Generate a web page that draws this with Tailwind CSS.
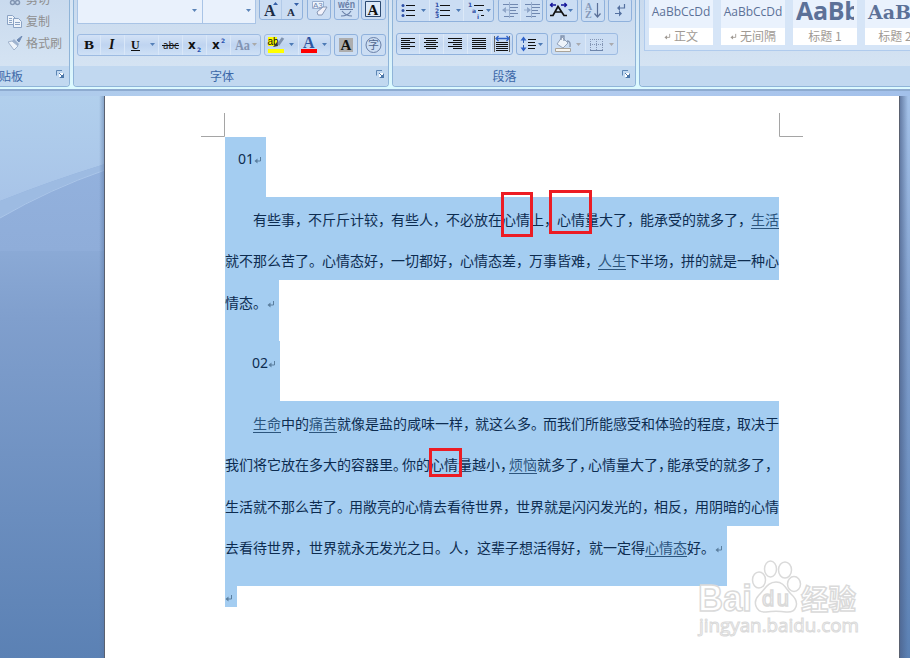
<!DOCTYPE html>
<html lang="zh-CN">
<head>
    <meta charset="UTF-8">
    <meta name="viewport" content="width=device-width, initial-scale=1.0">
    <title>Word</title>
    <script src="https://cdn.jsdelivr.net/npm/@tailwindcss/browser@4"></script>
</head>
<body class="w-[910px] h-[658px] overflow-hidden bg-[#6f8fc4] font-['Noto_Sans_CJK_SC',sans-serif]">
    <svg class="hidden">
        <defs>
            <symbol id="arrow" viewBox="0 0 5 3"><path d="M0 0h5L2.5 3z" fill="currentColor"/></symbol>
            <symbol id="launcher" viewBox="0 0 8 8"><path d="M.5 5.500V.5H6" fill="none" stroke="#5d86b5"/><path d="M3 3h5v5H3z" fill="#fff"/><path d="M3 3l3 3M7.500 3.500V7.500H3.500" stroke="#4d78aa" fill="none"/><path d="M5 5h3v3H5z" fill="#4d78aa"/></symbol>
            <symbol id="ret" viewBox="0 0 8 8"><path d="M6.500 1v4H1.500" fill="none" stroke="currentColor"/><path d="M3.500 2.500v5L0.500 5z" fill="currentColor"/></symbol>
        </defs>
    </svg>

    <!-- ribbon -->
    <header class="flex gap-[3px] h-[91px] w-[920px] bg-linear-to-b from-[#d6e3f3] to-[#dcfaff] border-b-2 border-[#8eabd0] overflow-hidden">
        <!-- clipboard -->
        <section class="flex flex-col w-[70px] h-[87px] shrink-0 border-r border-b border-[#8fb4d8] rounded-br bg-linear-to-b from-[#c9daee] to-[#d8e6f4] overflow-hidden">
            <div class="h-[67px] text-[12px] text-[#8f8f8f] flex flex-col">
                <div class="flex items-center h-[22px] -mt-[12px] pl-[8px] gap-[4px]">
                    <svg class="w-[14px] h-[14px]" viewBox="0 0 14 14" fill="none" stroke="#8396b3" stroke-width="1.500"><path d="M5 0l3 8M10 0L6 8"/><circle cx="4.500" cy="10.500" r="2"/><circle cx="9.500" cy="10.500" r="2"/></svg>
                    <span>剪切</span>
                </div>
                <div class="flex items-center h-[22px] pl-[7px] gap-[4px]">
                    <svg class="w-[15px] h-[13px]" viewBox="0 0 15 13" fill="#eef4fb" stroke="#8ba3c4"><path d="M.5.5h5l3 3v6h-8z"/><path d="M2 3.500h3M2 5.500h3M2 7.500h3"/><path d="M6.500 3.500h5l3 3v6h-8z"/><path d="M8 7.500h5M8 9.500h5"/></svg>
                    <span>复制</span>
                </div>
                <div class="flex items-center h-[22px] pl-[8px] gap-[3px]">
                    <svg class="w-[15px] h-[14px]" viewBox="0 0 15 14"><path d="M14 0l-5 4 2 2z" fill="#6f8bb5" stroke="#6f8bb5"/><path d="M6 3l5 5-1 2-6-5z" fill="#9db2d0"/><path d="M4 5l6 5-4 4L0 6z" fill="#eef4fb" stroke="#9fb2cc"/></svg>
                    <span>格式刷</span>
                </div>
            </div>
            <div class="flex justify-between items-center h-[20px] bg-[#c1d8f0] text-[12px] text-[#3c68a8] pr-[5px]">
                <span class="-ml-[1px]">贴板</span>
                <svg class="w-[8px] h-[8px] mb-[4px]"><use href="#launcher"/></svg>
            </div>
        </section>

        <!-- font -->
        <section class="flex flex-col w-[316px] h-[87px] shrink-0 border-x border-b border-[#8fb4d8] rounded-b bg-linear-to-b from-[#c9daee] to-[#d8e6f4] overflow-hidden">
            <div class="h-[67px] pl-[3px]">
                <div class="flex items-start h-[34px]">
                    <div class="flex items-start w-[126px] h-[24px] border-x border-b border-[#a9c4e6] bg-[#e9f1fc] justify-end pr-[5px] pt-[9px] text-[#5a84b8]"><svg class="w-[5px] h-[3px]"><use href="#arrow"/></svg></div>
                    <div class="flex items-start w-[53px] h-[24px] border-r border-b border-[#a9c4e6] bg-[#e9f1fc] justify-end pr-[4px] pt-[9px] text-[#5a84b8]"><svg class="w-[5px] h-[3px]"><use href="#arrow"/></svg></div>
                    <div class="flex w-[44px] h-[24px] -mt-[4px] ml-[3px] border border-[#8fb1dc] rounded-[3px] bg-[#cbddf3]">
                        <svg class="w-[42px] h-[22px]" viewBox="0 0 42 22"><path d="M21.500 0v22" stroke="#b2cae8"/><text x="4" y="18.500" font-size="16" font-weight="bold" font-family="Liberation Serif" fill="#1c2c44">A</text><text x="27" y="18.500" font-size="11" font-weight="bold" font-family="Liberation Serif" fill="#1c2c44">A</text><path d="M13 8h5l-2.500-3zM34 6h5l-2.500 3z" fill="#3560a8"/></svg>
                    </div>
                    <div class="w-[24px] h-[24px] -mt-[4px] ml-[4px] border border-[#8fb1dc] rounded-[3px] bg-[#cbddf3]">
                        <svg class="w-[22px] h-[22px]" viewBox="0 0 22 22"><path d="M4.500 4.500h11v7h-11z" fill="#eef4fc" stroke="#9ab0d0"/><text x="5" y="11" font-size="8" font-family="Liberation Sans" fill="#6c86b0">A3</text><path d="M9 15l6-5h4l-5 8h-4z" fill="#f2f2fa" stroke="#8999b6"/></svg>
                    </div>
                    <div class="w-[25px] h-[24px] -mt-[4px] ml-[3px] border border-[#8fb1dc] rounded-[3px] bg-[#cbddf3]">
                        <svg class="w-[23px] h-[22px]" viewBox="0 0 23 22"><text x="3" y="10.500" font-size="10" textLength="17" lengthAdjust="spacingAndGlyphs" font-weight="bold" font-family="Liberation Sans" fill="#6a80a8">wén</text><path d="M5 12.500h13M7 14q4 5 10 5M16 14q-3 5-10 5" fill="none" stroke="#6a80a8" stroke-width="1.200"/></svg>
                    </div>
                    <div class="w-[25px] h-[24px] -mt-[4px] ml-[2px] border border-[#8fb1dc] rounded-[3px] bg-[#cbddf3]">
                        <svg class="w-[23px] h-[22px]" viewBox="0 0 23 22"><path d="M3.500 4.500h15v15h-15z" fill="#dce9f8" stroke="#2c4a72"/><text x="5.500" y="17.500" font-size="15" font-weight="bold" font-family="Liberation Serif" fill="#111">A</text></svg>
                    </div>
                </div>
                <div class="flex h-[22px]">
                    <div class="flex w-[184px] h-[22px] border border-[#9dbbe2] rounded-[3px] bg-linear-to-b from-[#d3e2f6] via-[#bfd4f0] to-[#cfe1f6]">
                        <svg class="w-[182px] h-[20px]" viewBox="0 0 182 20">
                            <path d="M22.500 0v20M46.500 0v20M80.500 0v20M104.500 0v20M128.500 0v20M152.500 0v20" stroke="#d9e7f8"/>
                            <g fill="#111" font-size="13" font-weight="bold" font-family="Liberation Serif">
                                <text x="6" y="14" textLength="10" lengthAdjust="spacingAndGlyphs">B</text>
                                <text x="31" y="14" font-style="italic" font-size="14">I</text>
                                <text x="53" y="13.500" font-size="12">U</text>
                                <text x="85" y="14" font-weight="normal" font-family="DejaVu Sans" font-size="11" textLength="16" lengthAdjust="spacingAndGlyphs">abc</text>
                                <text x="110" y="14" font-family="DejaVu Sans" font-size="12">x</text>
                                <text x="134" y="14" font-family="DejaVu Sans" font-size="12">x</text>
                            </g>
                            <path d="M53 15.500h9M84 10.500h17" stroke="#111"/>
                            <g font-family="DejaVu Sans" font-size="6" fill="#2a53b0" font-weight="bold"><text x="119" y="17">2</text><text x="143" y="8">2</text></g>
                            <text x="157" y="15" font-family="Liberation Serif" font-weight="bold" font-size="14" textLength="15" lengthAdjust="spacingAndGlyphs" fill="#8294b2">Aa</text>
                            <path d="M72 8h5l-2.500 3z" fill="#5580b8"/><path d="M174 8h5l-2.500 3z" fill="#aaa9a8"/>
                        </svg>
                    </div>
                    <div class="w-[67px] h-[22px] ml-[3px] border border-[#9dbbe2] rounded-[3px] bg-linear-to-b from-[#d3e2f6] via-[#bfd4f0] to-[#cfe1f6]">
                        <svg class="w-[65px] h-[20px]" viewBox="0 0 65 20">
                            <path d="M33.500 0v20" stroke="#d9e7f8"/>
                            <path d="M3 2h9v9H3zM3 14h16v4H3z" fill="#ff0"/><text x="2.500" y="10" font-size="10" font-family="Liberation Sans" fill="#111">ab</text>
                            <path d="M18 3l-5 7" stroke="#7f92ad" stroke-width="3"/><path d="M12 7l-4 5 5-1z" fill="#333"/>
                            <path d="M24 8h5l-2.500 3zM57 8h5l-2.500 3z" fill="#4d7ab5"/>
                            <text x="38" y="13" font-size="16" font-weight="bold" font-family="Liberation Serif" fill="#2f55a0">A</text>
                            <path d="M36 14h16v4H36z" fill="#f00"/>
                        </svg>
                    </div>
                    <div class="w-[24px] h-[22px] ml-[3px] border border-[#8fb1dc] rounded-[3px] bg-[#cbddf3]">
                        <svg class="w-[22px] h-[20px]" viewBox="0 0 22 20"><path d="M4 3h14v14H4z" fill="#adadad"/><text x="5.500" y="15" font-size="15" font-weight="bold" font-family="Liberation Serif" fill="#111">A</text></svg>
                    </div>
                    <div class="w-[25px] h-[22px] ml-[3px] border border-[#8fb1dc] rounded-[3px] bg-[#cbddf3]">
                        <svg class="w-[23px] h-[20px]" viewBox="0 0 23 20"><circle cx="11.500" cy="10" r="7.500" fill="none" stroke="#6a80a8"/><text x="6" y="14" font-size="11" fill="#4f668e">字</text></svg>
                    </div>
                </div>
            </div>
            <div class="flex items-center h-[20px] bg-[#c1d8f0] text-[12px] text-[#3c68a8] pr-[4px]">
                <span class="flex-1 text-center pr-[6px]">字体</span>
                <svg class="w-[8px] h-[8px] mb-[4px]"><use href="#launcher"/></svg>
            </div>
        </section>

        <!-- paragraph -->
        <section class="flex flex-col w-[244px] h-[87px] shrink-0 border-x border-b border-[#8fb4d8] rounded-b bg-linear-to-b from-[#c9daee] to-[#d8e6f4] overflow-hidden">
            <div class="h-[67px] pl-[3px]">
                <div class="flex h-[33px]">
                    <div class="w-[98px] h-[24px] -mt-[2px] border border-[#8fb1dc] rounded-[3px] bg-[#cbddf3]">
                        <svg class="w-[96px] h-[22px]" viewBox="0 0 96 22">
                            <path d="M32.500 0v22M66.500 0v22" stroke="#dce9f8"/>
                            <g fill="#2f4fa5"><circle cx="6" cy="6.500" r="1.500"/><circle cx="6" cy="11.500" r="1.500"/><circle cx="6" cy="16.500" r="1.500"/></g>
                            <path d="M9 6.500h9M9 11.500h9M9 16.500h9M43 6.500h10M43 11.500h10M43 16.500h10M77 6.500h10M81 11.500h5M84 16.500h3" stroke="#111"/>
                            <g font-size="6" font-family="DejaVu Sans" font-weight="bold" fill="#2f4fa5"><text x="38" y="8">1</text><text x="38" y="13.500">2</text><text x="38" y="19">3</text><text x="71" y="8">1</text><text x="75" y="14">a</text><text x="80" y="20">i</text></g>
                            <path d="M24 10h5l-2.500 3zM59 10h5l-2.500 3zM89 10h5l-2.500 3z" fill="#4d7ab5"/>
                        </svg>
                    </div>
                    <div class="w-[45px] h-[24px] -mt-[2px] ml-[4px] border border-[#8fb1dc] rounded-[3px] bg-[#cbddf3]">
                        <svg class="w-[43px] h-[22px]" viewBox="0 0 43 22"><path d="M21.500 0v22" stroke="#dce9f8"/><path d="M4 5.500h15M11 8.500h8M11 11.500h6M11 14.500h8M5 17.500h10M26 5.500h15M33 8.500h8M33 11.500h6M33 14.500h8M27 17.500h10" stroke="#7088b0"/><path d="M3 11l4-3v6zM32 11l-4-3v6z" fill="#8ea5c8"/><path d="M6 11h4M25 11h4M10.500 3v16M32.500 3v16" stroke="#9ab0d0"/></svg>
                    </div>
                    <div class="w-[32px] h-[24px] -mt-[2px] ml-[3px] border border-[#8fb1dc] rounded-[3px] bg-[#cbddf3]">
                        <svg class="w-[30px] h-[22px]" viewBox="0 0 30 22"><path d="M3 16.500h3l5-9 6 9h3M8 13h7" fill="none" stroke="#111" stroke-width="1.700"/><path d="M3 6h6M14 6h6M5.500 4L3.500 6l2 2M17.500 4l2 2-2 2" fill="none" stroke="#15159a" stroke-width="1.400"/><path d="M21 10h5l-2.500 3z" fill="#4d7ab5"/></svg>
                    </div>
                    <div class="w-[24px] h-[24px] -mt-[2px] ml-[3px] border border-[#8fb1dc] rounded-[3px] bg-[#cbddf3]">
                        <svg class="w-[22px] h-[22px]" viewBox="0 0 22 22"><g font-size="10" font-family="Liberation Serif" font-weight="bold" fill="#8397b8"><text x="3" y="10.500">A</text><text x="3" y="19">Z</text></g><path d="M15.500 4v14M12.500 14.500l3 3.500 3-3.500" fill="none" stroke="#5a7099" stroke-width="1.200"/></svg>
                    </div>
                    <div class="w-[24px] h-[24px] -mt-[2px] ml-[3px] border border-[#8fb1dc] rounded-[3px] bg-[#cbddf3]">
                        <svg class="w-[22px] h-[22px]" viewBox="0 0 22 22"><path d="M15.500 5v4H10M6 14.500h5" fill="none" stroke="#5470a0" stroke-width="1.200"/><path d="M11 6v6L8 9zM10 11.500v6l3-3z" fill="#5470a0"/></svg>
                    </div>
                </div>
                <div class="flex h-[22px]">
                    <div class="w-[117px] h-[22px] border border-[#8fb1dc] rounded-[3px] bg-linear-to-b from-[#d3e2f6] via-[#c3d7f1] to-[#cfe1f6]">
                        <svg class="w-[115px] h-[20px]" viewBox="0 0 115 20">
                            <path d="M22.500 0v20M46.500 0v20M70.500 0v20M94.500 0v20" stroke="#dce9f8"/>
                            <path d="M4 4.500h14M4 6.500h9M4 8.500h14M4 10.500h9M4 12.500h14M4 14.500h9M27 4.500h14M29 6.500h10M27 8.500h14M29 10.500h10M27 12.500h14M29 14.500h10M51 4.500h14M56 6.500h9M51 8.500h14M56 10.500h9M51 12.500h14M56 14.500h9M75 4.500h14M75 6.500h14M75 8.500h14M75 10.500h14M75 12.500h14M75 14.500h14M99 8.500h12M99 10.500h12M99 12.500h12M99 14.500h12M99 16.500h12" stroke="#111"/>
                            <path d="M97.500 2v16M112.500 2v16" stroke="#666"/><path d="M100 4.500h11M101.500 2L99 4.500l2.500 2.500M109.500 2l2.500 2.500-2.500 2.500" fill="none" stroke="#2f62c8" stroke-width="1.300"/>
                        </svg>
                    </div>
                    <div class="w-[32px] h-[22px] ml-[3px] border border-[#8fb1dc] rounded-[3px] bg-[#cbddf3]">
                        <svg class="w-[30px] h-[20px]" viewBox="0 0 30 20"><path d="M6.500 4v5M6.500 11v5" stroke="#2f5fb5"/><path d="M3.500 6.500l3-4 3 4zM3.500 13.500l3 4 3-4z" fill="#2f62c8"/><path d="M11 5.500h8M11 8.500h7M11 11.500h8M11 14.500h7" stroke="#111"/><path d="M21 9h5l-2.500 3z" fill="#4d7ab5"/></svg>
                    </div>
                    <div class="w-[67px] h-[22px] ml-[3px] border border-[#9dbbe2] rounded-[3px] bg-[#cbddf3]">
                        <svg class="w-[65px] h-[20px]" viewBox="0 0 65 20"><path d="M33.500 0v20" stroke="#dce9f8"/><path d="M10 3l6 6-5 5-6-4z" fill="#eef3fa" stroke="#93a3bb"/><path d="M12 7V2h-3v4M15 7q4 0 3 6" fill="none" stroke="#8192ad" stroke-width="1.300"/><path d="M3.500 14.500h15v3h-15z" fill="#f7f5f0" stroke="#aaa49a"/><path d="M24 9h5l-2.500 3zM57 9h5l-2.500 3z" fill="#a9aaae"/><path d="M38.500 5v11M50.500 5v11M44.500 5v11M38 5.500h13M38 10.500h13" stroke="#8496b5" stroke-dasharray="1 1"/><path d="M38 16.500h13" stroke="#6f86ab"/></svg>
                    </div>
                </div>
            </div>
            <div class="flex items-center h-[20px] bg-[#c1d8f0] text-[12px] text-[#3c68a8] pr-[5px]">
                <span class="flex-1 text-center pr-[6px]">段落</span>
                <svg class="w-[8px] h-[8px] mb-[4px]"><use href="#launcher"/></svg>
            </div>
        </section>

        <!-- styles -->
        <section class="flex flex-col w-[280px] h-[87px] shrink-0 border-l border-b border-[#8fb4d8] rounded-bl bg-linear-to-b from-[#c9daee] to-[#d8e6f4] overflow-hidden">
            <div class="h-[67px] pl-[4px]">
                <div class="flex gap-[8px] h-[51px] pl-[4px] border-l border-b border-[#b0cbed] bg-[#d6e5f7] text-[#5c7198]">
                    <div class="w-[64px] h-[45px] shrink-0 bg-white">
                        <div class="flex justify-center h-[28px] bg-[#eaf2fd] text-[12px] leading-[24px] font-['Open_Sans',sans-serif] whitespace-nowrap"><span>AaBbCcDd</span></div>
                        <div class="flex items-center justify-center h-[17px] pb-[1px] gap-[3px] text-[12px] text-[#a09a94]"><svg class="w-[7px] h-[7px]"><use href="#ret"/></svg><span>正文</span></div>
                    </div>
                    <div class="w-[64px] h-[45px] shrink-0 bg-white">
                        <div class="flex justify-center h-[28px] bg-[#eaf2fd] text-[12px] leading-[24px] font-['Open_Sans',sans-serif] whitespace-nowrap"><span>AaBbCcDd</span></div>
                        <div class="flex items-center justify-center h-[17px] pb-[1px] gap-[3px] text-[12px] text-[#a09a94]"><svg class="w-[7px] h-[7px]"><use href="#ret"/></svg><span>无间隔</span></div>
                    </div>
                    <div class="w-[64px] h-[45px] shrink-0 bg-white">
                        <div class="h-[28px] bg-[#eaf2fd] px-[3px]"><div class="h-[28px] overflow-hidden text-[25px] leading-[20px] font-bold font-['Open_Sans',sans-serif] tracking-[-0.3px] whitespace-nowrap">AaBb</div></div>
                        <div class="flex items-center justify-center h-[17px] pb-[1px] text-[12px] text-[#a09a94]">标题 1</div>
                    </div>
                    <div class="w-[64px] h-[45px] shrink-0 bg-white">
                        <div class="h-[28px] bg-[#eaf2fd] pl-[3px] text-[19px] leading-[24px] font-bold font-['DejaVu_Serif',serif] whitespace-nowrap overflow-hidden">AaBb</div>
                        <div class="flex items-center justify-center h-[17px] pb-[1px] pr-[4px] text-[12px] text-[#a09a94]">标题 2</div>
                    </div>
                </div>
            </div>
            <div class="h-[20px] bg-[#c1d8f0]"></div>
        </section>
    </header>

    <!-- document window -->
    <main class="relative flex h-[567px] bg-linear-to-b from-[#a5c3ea] from-0% via-[#809fcd] via-40% to-[#5b81b4]">
        <svg class="absolute left-0 top-0 w-[105px] h-[160px]" viewBox="0 0 105 160">
            <defs>
                <linearGradient id="wave" x1="0" y1="0" x2="0" y2="1"><stop offset="0" stop-color="#b2d0ed"/><stop offset="1" stop-color="#a8c4e8"/></linearGradient>
                <linearGradient id="hill" x1="0" y1="0" x2="0" y2="1"><stop offset="0" stop-color="#96b5e1"/><stop offset="1" stop-color="#8fadd9"/></linearGradient>
            </defs>
            <path d="M0 0h105v160H0z" fill="url(#hill)"/>
            <path d="M0 0h105v73Q50 90 0 110z" fill="url(#wave)"/>
            <path d="M0 110Q50 90 105 73v6Q50 97 0 127z" fill="#9dbbe2"/>
            <path d="M0 127Q50 98 105 79" fill="none" stroke="#abc6e9"/>
        </svg>
        <div class="absolute left-0 top-0 w-[910px] h-[5px] bg-linear-to-r from-[#accaeb] via-[#b9d0f0] to-[#a2c0ea]"></div>
        <div class="absolute left-[99px] top-[5px] w-[5px] h-[562px] bg-linear-to-r from-[#56739f]/0 to-[#56739f]/45"></div>
        <div class="absolute left-[900px] top-[5px] w-[8px] h-[562px] bg-linear-to-r from-[#4a5f88]/70 to-[#4a5f88]/0"></div>
        <div class="relative mt-[5px] ml-[104px] w-[796px] h-[562px] bg-white border-x border-[#5a6170]">
            <!-- margin marks -->
            <svg class="absolute left-[96px] top-[17px] w-[604px] h-[25px]" viewBox="0 0 604 25" fill="none" stroke="#a5a5a5"><path d="M0 23.500h23.500V0M578.500 0v23.500H602"/></svg>

            <div class="pt-[41px] pl-[120px] text-[14px] leading-[44px] text-[#0d2c50] whitespace-nowrap">
                <div class="flex items-center w-[41px] h-[60px] pb-[17px] pl-[13px] bg-[#a4cdf1]"><span class="leading-none font-['Noto_Sans',sans-serif]">01</span><svg class="w-[8px] h-[8px] mt-[3px] shrink-0 text-[#5b7f9f]"><use href="#ret"/></svg></div>
                <div class="flex w-[554px] h-[41px] pl-[28px] bg-[#a4cdf1]">
                    <span class="w-[55px]">有些事，</span><span class="w-[83px]">不斤斤计较，</span><span class="w-[55px]">有些人，</span><span class="w-[111px]">不必放在心情上，</span><span class="w-[83px]">心情量大了，</span><span class="w-[111px]">能承受的就多了，</span><span class="w-[28px] text-[#2c557d] underline underline-offset-[3px]">生活</span>
                </div>
                <div class="flex w-[554px] h-[42px] bg-[#a4cdf1]">
                    <span class="w-[97px]">就不那么苦了。</span><span class="w-[69px]">心情态好，</span><span class="w-[69px]">一切都好，</span><span class="w-[69px]">心情态差，</span><span class="w-[69px]">万事皆难，</span><span class="w-[28px] text-[#2c557d] underline underline-offset-[3px]">人生</span><span class="w-[55px]">下半场，</span><span class="w-[98px]">拼的就是一种心</span>
                </div>
                <div class="flex w-[54px] h-[61px] bg-[#a4cdf1]"><span class="w-[42px]">情态。</span><svg class="w-[8px] h-[8px] mt-[20px] shrink-0 text-[#5b7f9f]"><use href="#ret"/></svg></div>
                <div class="flex items-center w-[55px] h-[60px] pb-[17px] pl-[27px] bg-[#a4cdf1]"><span class="leading-none font-['Noto_Sans',sans-serif]">02</span><svg class="w-[8px] h-[8px] mt-[3px] shrink-0 text-[#5b7f9f]"><use href="#ret"/></svg></div>
                <div class="flex w-[554px] h-[41px] pl-[28px] bg-[#a4cdf1]">
                    <span class="w-[28px] text-[#2c557d] underline underline-offset-[3px]">生命</span><span class="w-[28px]">中的</span><span class="w-[28px] text-[#2c557d] underline underline-offset-[3px]">痛苦</span><span class="w-[138px]">就像是盐的咸味一样，</span><span class="w-[68px]">就这么多。</span><span class="w-[194px]">而我们所能感受和体验的程度，</span><span class="w-[42px]">取决于</span>
                </div>
                <!-- this line is set with half-width punctuation -->
                <div class="flex w-[554px] h-[42px] bg-[#a4cdf1] [font-feature-settings:'halt']">
                    <span class="w-[177px]">我们将它放在多大的容器里。</span><span class="w-[107px]">你的心情量越小，</span><span class="w-[28px] text-[#2c557d] underline underline-offset-[3px]">烦恼</span><span class="w-[51px]">就多了，</span><span class="w-[79px]">心情量大了，</span><span class="w-[112px]">能承受的就多了，</span>
                </div>
                <div class="flex w-[554px] h-[42px] bg-[#a4cdf1]">
                    <span class="w-[124px]">生活就不那么苦了。</span><span class="w-[167px]">用敞亮的心情去看待世界，</span><span class="w-[138px]">世界就是闪闪发光的，</span><span class="w-[41px]">相反，</span><span class="w-[84px]">用阴暗的心情</span>
                </div>
                <div class="flex w-[502px] h-[60px] leading-[43px] bg-[#a4cdf1]">
                    <span class="w-[84px]">去看待世界，</span><span class="w-[140px]">世界就永无发光之日。</span><span class="w-[28px]">人，</span><span class="w-[112px]">这辈子想活得好，</span><span class="w-[56px]">就一定得</span><span class="w-[42px] text-[#2c557d] underline underline-offset-[3px]">心情态</span><span class="w-[28px]">好。</span><svg class="w-[8px] h-[8px] mt-[19px] shrink-0 text-[#5b7f9f]"><use href="#ret"/></svg>
                </div>
                <div class="flex w-[12px] h-[21px] bg-[#a4cdf1]"><svg class="w-[8px] h-[8px] mt-[8px] text-[#5b7f9f]"><use href="#ret"/></svg></div>
            </div>

            <!-- highlight boxes -->
            <div class="absolute left-[396px] top-[96px] w-[32px] h-[45px] border-3 border-[#ec1c24]"></div>
            <div class="absolute left-[444px] top-[94px] w-[43px] h-[44px] border-3 border-[#ec1c24]"></div>
            <div class="absolute left-[324px] top-[352px] w-[33px] h-[29px] border-3 border-[#ec1c24]"></div>

            <!-- watermark -->
            <svg class="absolute left-[590px] top-[460px] w-[180px] h-[85px]" viewBox="0 0 180 85" fill="#fff" stroke="#dadada" stroke-width="1.500">
                <ellipse cx="64" cy="24" rx="6.500" ry="8"/><ellipse cx="75.500" cy="13" rx="6" ry="8"/><ellipse cx="90" cy="14" rx="6.500" ry="8"/><ellipse cx="99" cy="28" rx="6.500" ry="7.500"/>
                <path d="M81 26c8 0 10 7 15 12 10 9 5 19-5 18-6-1-14-1-20 0-10 1-14-10-7-17 6-6 9-13 17-13z"/>
                <g font-family="Liberation Sans" font-weight="bold">
                    <text x="3" y="55" font-size="36" textLength="54" lengthAdjust="spacingAndGlyphs">Bai</text>
                    <text x="67" y="50" font-size="22" font-weight="normal" textLength="27">du</text>
                    <text x="106" y="54" font-size="28" textLength="55" lengthAdjust="spacingAndGlyphs" font-family="Noto Sans CJK SC">经验</text>
                </g>
                <text x="4" y="76" font-size="18" textLength="160" lengthAdjust="spacingAndGlyphs" font-family="Open Sans" stroke-width="1">jingyan.baidu.com</text>
            </svg>
        </div>
    </main>
</body>
</html>
